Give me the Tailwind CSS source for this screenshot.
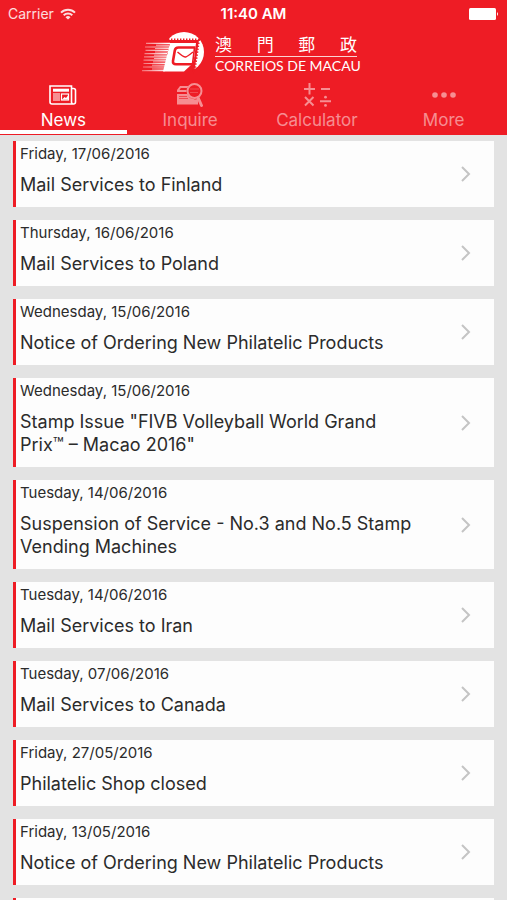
<!DOCTYPE html>
<html lang="en">
<head>
    <meta charset="utf-8">
    <meta name="viewport" content="width=device-width, initial-scale=1">
    <title>Correios de Macau - News</title>
    <script src="https://cdn.jsdelivr.net/npm/@tailwindcss/browser@4"></script>
</head>

<body class="bg-[#e3e3e3] font-['Inter','Noto_Sans_CJK_TC',sans-serif] text-[#2b2b2b]">
    <div class="h-screen overflow-hidden">

        <header class="bg-[#ee1c25] text-white">
            <!-- Status bar -->
            <div class="grid grid-cols-3 items-center h-7 px-2 text-sm">
                <div class="flex items-center gap-1.5 text-white/85">
                    <span>Carrier</span>
                    <svg class="w-4 h-3" viewBox="0 0 16 12" fill="none" stroke="currentColor" stroke-width="2">
                        <path d="M1 4.6a10 10 0 0 1 14 0"/>
                        <path d="M3.7 7.3a6.2 6.2 0 0 1 8.6 0"/>
                        <path d="M8 11.6L5.5 9.2a3.6 3.6 0 0 1 5 0z" fill="currentColor" stroke="none"/>
                    </svg>
                </div>
                <div class="text-center text-[15px] font-semibold">11:40 AM</div>
                <svg class="justify-self-end w-[30px] h-3" viewBox="0 0 30 12" fill="currentColor">
                    <rect x="0" y="0" width="27" height="12" rx="1.5"/>
                    <path d="M28 4q2 2 0 4z"/>
                </svg>
            </div>

            <!-- Logo -->
            <div class="flex justify-center gap-[9px] h-[50px] pt-1 pr-2">
                <svg class="w-16 h-[42px]" viewBox="0 0 64 42" fill="none">
                    <defs>
                        <linearGradient id="streak" gradientUnits="userSpaceOnUse" x1="0" y1="0" x2="26" y2="0">
                            <stop offset="0" stop-color="#fff" stop-opacity=".35"/>
                            <stop offset="1" stop-color="#fff"/>
                        </linearGradient>
                    </defs>
                    <circle cx="42" cy="20" r="20" fill="#fff"/>
                    <path d="M14 8H56L51 42H14z" fill="#ee1c25"/>
                    <path d="M28 11H54L52 28 49 33 42 39.500H21z" fill="#fff"/>
                    <path d="M26 8.800H56L51.500 40" stroke="#ee1c25" stroke-width="1.600"/>
                    <path d="M26 8H56.500L52 40" stroke="#ee1c25" stroke-width="3" stroke-dasharray="1.400 1.600"/>
                    <path d="M53.500 15.500H36.500Q33.300 15.500 32.800 18.500L31 29Q30.500 32.300 34 32.300H50" stroke="#ee1c25" stroke-width="2.600"/>
                    <path d="M52.500 16L50.500 32" stroke="#ee1c25" stroke-width="1.600"/>
                    <path d="M35.500 20q6.500 5.500 8.200 5t7.300-5" stroke="#ee1c25" stroke-width="1.500"/>
                    <g stroke="url(#streak)">
                        <path d="M4 11.400H28M3 15H27M3.500 18.300H26M2.500 21.600H25M2 24.900H25M1.500 28.200H24M1.500 31.500H24M1 35H23M0 38.700H23" stroke-width="1.200"/>
                        <path d="M14 13.200H27M13 16.600H27M13 20H26M12 23.200H25M12 26.500H25M11 29.900H24M10 33.200H24M10 37H23" stroke-width=".9"/>
                    </g>
                </svg>
                <div class="w-[142px]">
                    <div class="flex justify-between h-[25px] border-b border-white/80 text-[17px] leading-6 font-normal font-['Noto_Sans_CJK_TC',sans-serif]" lang="zh-Hant">
                        <span>澳</span><span>門</span><span>郵</span><span>政</span>
                    </div>
                    <div class="font-['Lato',sans-serif] text-sm leading-[18px] whitespace-nowrap">CORREIOS DE MACAU</div>
                </div>
            </div>

            <!-- Tabs -->
            <nav class="grid grid-cols-4 pb-px text-[17px] leading-5 text-white/50">
                <a href="#news" class="flex flex-col items-center gap-[5px] h-14 pt-[7px] border-b-4 border-white text-white">
                    <svg class="w-7 h-5" viewBox="0 0 28 20" fill="none" stroke="currentColor">
                        <path d="M23 3.500h1.500q2 0 2 2V17q0 2-2 2H3q-2 0-2-2V1H22.500V17q0 2 2 2" stroke-width="1.600"/>
                        <path d="M4 5.200H20" stroke-width="3"/>
                        <path d="M4 9H11M4 11H11M4 13H11M4 15H11" stroke-width="1.200"/>
                        <rect x="12.500" y="9" width="7" height="6" stroke-width="1.200"/>
                        <path d="M13 14.500l2.500-2.500 1.500 1 2-2.500v4z" fill="currentColor" stroke="none"/>
                    </svg>
                    <span>News</span>
                </a>
                <a href="#inquire" class="flex flex-col items-center gap-[5px] h-14 pt-[7px]">
                    <!-- one group opacity keeps the overlapping strokes an even tone -->
                    <svg class="w-7 h-5 overflow-visible text-white opacity-50" viewBox="0 0 28 20" fill="none" stroke="currentColor">
                        <path d="M1 19.500V5L4 1H12.500L11 3H4.800L3.500 5H10.500V7H1M1 9H11.500L14 13 19 14.500 22 14V19.500H1z" fill="currentColor" stroke="none"/>
                        <path d="M3 11.500H11M3 13.500H12" stroke="#ee1c25" stroke-width=".6"/>
                        <circle cx="18.500" cy="6" r="7" stroke-width="2"/>
                        <path d="M14 4H23M14 7.500H22" stroke-width=".8" opacity=".5"/>
                        <path d="M22 12.500l3.500 8" stroke-width="3" stroke-linecap="round"/>
                    </svg>
                    <span>Inquire</span>
                </a>
                <a href="#calculator" class="flex flex-col items-center gap-[5px] h-14 pt-[7px]">
                    <svg class="w-7 h-5 overflow-visible" viewBox="0 0 28 20" fill="none" stroke="currentColor" stroke-width="2">
                        <path d="M1 4H12M6.500-2V9.500M18 4H27"/>
                        <path d="M2 12l8.500 8.500M10.500 12L2 20.500M17 16.300H28"/>
                        <circle cx="22.500" cy="12.200" r="1.400" fill="currentColor" stroke="none"/>
                        <circle cx="22.500" cy="20.400" r="1.400" fill="currentColor" stroke="none"/>
                    </svg>
                    <span>Calculator</span>
                </a>
                <a href="#more" class="flex flex-col items-center gap-[5px] h-14 pt-[7px]">
                    <svg class="w-7 h-5" viewBox="0 0 28 20" fill="currentColor">
                        <circle cx="5" cy="10" r="2.800"/>
                        <circle cx="14" cy="10" r="2.800"/>
                        <circle cx="23" cy="10" r="2.800"/>
                    </svg>
                    <span>More</span>
                </a>
            </nav>
        </header>

        <!-- News list -->
        <main class="flex flex-col gap-[13px] px-[13px] pt-1.5">
            <a href="#" class="flex items-center justify-between bg-[#fdfdfd] border-l-3 border-[#ee1c25] pt-[3px] pb-[11px] pl-1 pr-[23px]">
                <div class="max-w-[400px]">
                    <p class="text-[15px] leading-5">Friday, 17/06/2016</p>
                    <h2 class="mt-[9px] text-lg leading-[23px]">Mail Services to Finland</h2>
                </div>
                <svg class="shrink-0 w-[11px] h-4 mt-2" viewBox="0 0 11 16" fill="none" stroke="#c4c4c4" stroke-width="2"><path d="M2 1l7 7-7 7"/></svg>
            </a>
            <a href="#" class="flex items-center justify-between bg-[#fdfdfd] border-l-3 border-[#ee1c25] pt-[3px] pb-[11px] pl-1 pr-[23px]">
                <div class="max-w-[400px]">
                    <p class="text-[15px] leading-5">Thursday, 16/06/2016</p>
                    <h2 class="mt-[9px] text-lg leading-[23px]">Mail Services to Poland</h2>
                </div>
                <svg class="shrink-0 w-[11px] h-4 mt-2" viewBox="0 0 11 16" fill="none" stroke="#c4c4c4" stroke-width="2"><path d="M2 1l7 7-7 7"/></svg>
            </a>
            <a href="#" class="flex items-center justify-between bg-[#fdfdfd] border-l-3 border-[#ee1c25] pt-[3px] pb-[11px] pl-1 pr-[23px]">
                <div class="max-w-[400px]">
                    <p class="text-[15px] leading-5">Wednesday, 15/06/2016</p>
                    <h2 class="mt-[9px] text-lg leading-[23px]">Notice of Ordering New Philatelic Products</h2>
                </div>
                <svg class="shrink-0 w-[11px] h-4 mt-2" viewBox="0 0 11 16" fill="none" stroke="#c4c4c4" stroke-width="2"><path d="M2 1l7 7-7 7"/></svg>
            </a>
            <a href="#" class="flex items-center justify-between bg-[#fdfdfd] border-l-3 border-[#ee1c25] pt-[3px] pb-[11px] pl-1 pr-[23px]">
                <div class="max-w-[400px]">
                    <p class="text-[15px] leading-5">Wednesday, 15/06/2016</p>
                    <h2 class="mt-[9px] text-lg leading-[23px]">Stamp Issue "FIVB Volleyball World Grand Prix™ – Macao 2016"</h2>
                </div>
                <svg class="shrink-0 w-[11px] h-4 mt-2" viewBox="0 0 11 16" fill="none" stroke="#c4c4c4" stroke-width="2"><path d="M2 1l7 7-7 7"/></svg>
            </a>
            <a href="#" class="flex items-center justify-between bg-[#fdfdfd] border-l-3 border-[#ee1c25] pt-[3px] pb-[11px] pl-1 pr-[23px]">
                <div class="max-w-[400px]">
                    <p class="text-[15px] leading-5">Tuesday, 14/06/2016</p>
                    <h2 class="mt-[9px] text-lg leading-[23px]">Suspension of Service - No.3 and No.5 Stamp Vending Machines</h2>
                </div>
                <svg class="shrink-0 w-[11px] h-4 mt-2" viewBox="0 0 11 16" fill="none" stroke="#c4c4c4" stroke-width="2"><path d="M2 1l7 7-7 7"/></svg>
            </a>
            <a href="#" class="flex items-center justify-between bg-[#fdfdfd] border-l-3 border-[#ee1c25] pt-[3px] pb-[11px] pl-1 pr-[23px]">
                <div class="max-w-[400px]">
                    <p class="text-[15px] leading-5">Tuesday, 14/06/2016</p>
                    <h2 class="mt-[9px] text-lg leading-[23px]">Mail Services to Iran</h2>
                </div>
                <svg class="shrink-0 w-[11px] h-4 mt-2" viewBox="0 0 11 16" fill="none" stroke="#c4c4c4" stroke-width="2"><path d="M2 1l7 7-7 7"/></svg>
            </a>
            <a href="#" class="flex items-center justify-between bg-[#fdfdfd] border-l-3 border-[#ee1c25] pt-[3px] pb-[11px] pl-1 pr-[23px]">
                <div class="max-w-[400px]">
                    <p class="text-[15px] leading-5">Tuesday, 07/06/2016</p>
                    <h2 class="mt-[9px] text-lg leading-[23px]">Mail Services to Canada</h2>
                </div>
                <svg class="shrink-0 w-[11px] h-4 mt-2" viewBox="0 0 11 16" fill="none" stroke="#c4c4c4" stroke-width="2"><path d="M2 1l7 7-7 7"/></svg>
            </a>
            <a href="#" class="flex items-center justify-between bg-[#fdfdfd] border-l-3 border-[#ee1c25] pt-[3px] pb-[11px] pl-1 pr-[23px]">
                <div class="max-w-[400px]">
                    <p class="text-[15px] leading-5">Friday, 27/05/2016</p>
                    <h2 class="mt-[9px] text-lg leading-[23px]">Philatelic Shop closed</h2>
                </div>
                <svg class="shrink-0 w-[11px] h-4 mt-2" viewBox="0 0 11 16" fill="none" stroke="#c4c4c4" stroke-width="2"><path d="M2 1l7 7-7 7"/></svg>
            </a>
            <a href="#" class="flex items-center justify-between bg-[#fdfdfd] border-l-3 border-[#ee1c25] pt-[3px] pb-[11px] pl-1 pr-[23px]">
                <div class="max-w-[400px]">
                    <p class="text-[15px] leading-5">Friday, 13/05/2016</p>
                    <h2 class="mt-[9px] text-lg leading-[23px]">Notice of Ordering New Philatelic Products</h2>
                </div>
                <svg class="shrink-0 w-[11px] h-4 mt-2" viewBox="0 0 11 16" fill="none" stroke="#c4c4c4" stroke-width="2"><path d="M2 1l7 7-7 7"/></svg>
            </a>
            <!-- next entry, below the fold -->
            <div class="h-16 bg-[#fdfdfd] border-l-3 border-[#ee1c25]"></div>
        </main>
    </div>
</body>
</html>
